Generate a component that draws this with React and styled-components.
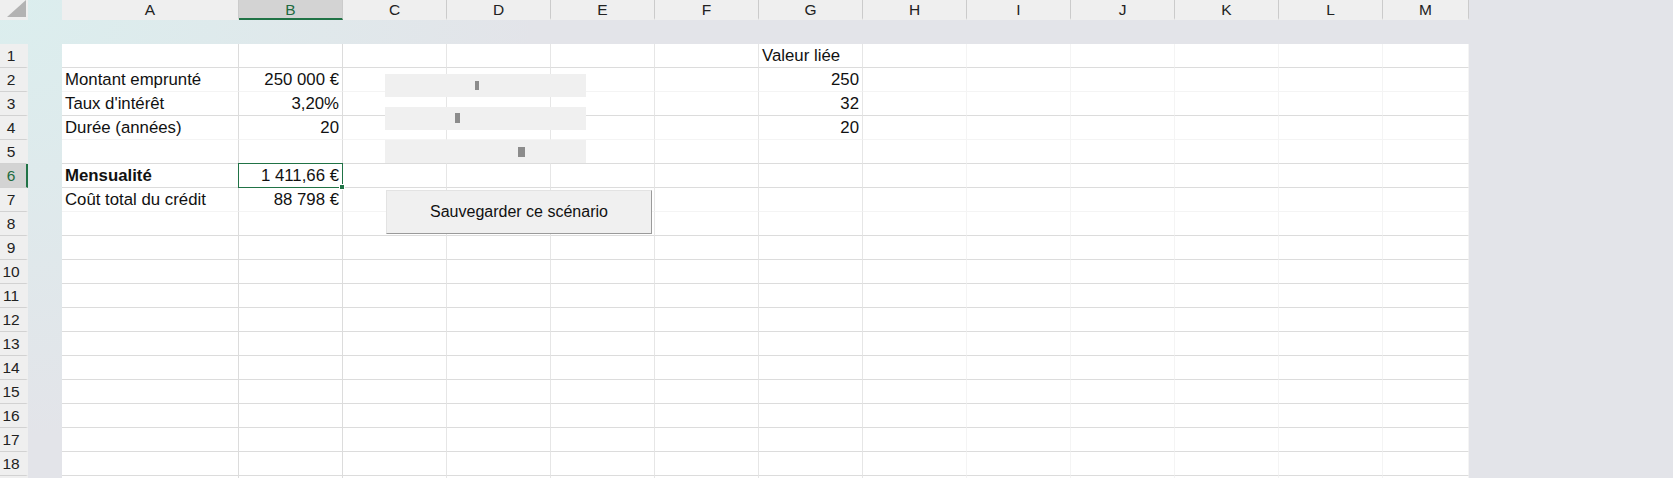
import React from "react";
import styled, { createGlobalStyle, css } from "styled-components";

const GlobalStyle = createGlobalStyle`
  html, body {
    margin: 0;
    padding: 0;
    width: 1673px;
    height: 478px;
    overflow: hidden;
  }
  body {
    font-family: "Liberation Sans", Arial, sans-serif;
    background:
      radial-gradient(ellipse 540px 440px at 0 0, #dbeeee 0%, rgba(227,228,233,0) 100%),
      #e3e4e9;
  }
`;

const LINE = {
  strong: "#dcdcdc",
  medium: "#e6e6e6",
  faint: "#f4f4f4",
};

const COLUMNS = [
  { key: "A", width: 177, v: "strong" },
  { key: "B", width: 104, v: "strong" },
  { key: "C", width: 104, v: "medium" },
  { key: "D", width: 104, v: "medium" },
  { key: "E", width: 104, v: "medium" },
  { key: "F", width: 104, v: "medium" },
  { key: "G", width: 104, v: "medium" },
  { key: "H", width: 104, v: "faint" },
  { key: "I", width: 104, v: "faint" },
  { key: "J", width: 104, v: "faint" },
  { key: "K", width: 104, v: "faint" },
  { key: "L", width: 104, v: "faint" },
  { key: "M", width: 86, v: "faint" },
];

const ROW_LINES = {
  1: "strong",
  2: "faint",
  3: "strong",
  4: "faint",
  5: "strong",
  6: "strong",
  7: "faint",
};

const DATA = {
  1: { G: { text: "Valeur liée" } },
  2: {
    A: { text: "Montant emprunté" },
    B: { text: "250 000 €", right: true },
    G: { text: "250", right: true },
  },
  3: {
    A: { text: "Taux d'intérêt" },
    B: { text: "3,20%", right: true },
    G: { text: "32", right: true },
  },
  4: {
    A: { text: "Durée (années)" },
    B: { text: "20", right: true },
    G: { text: "20", right: true },
  },
  6: {
    A: { text: "Mensualité", bold: true },
    B: { text: "1 411,66 €", right: true, selected: true },
  },
  7: {
    A: { text: "Coût total du crédit" },
    B: { text: "88 798 €", right: true },
  },
};

const SLIDERS = [
  { top: 74, thumbLeft: 90, thumbWidth: 4, thumbTop: 7, thumbHeight: 9 },
  { top: 107, thumbLeft: 70, thumbWidth: 5, thumbTop: 6, thumbHeight: 10 },
  { top: 140, thumbLeft: 133, thumbWidth: 7, thumbTop: 7, thumbHeight: 10 },
];

const Sheet = styled.div`
  position: relative;
  display: flex;
  flex-direction: column;
  width: 1469px;
`;

const HeaderBar = styled.div`
  display: flex;
  height: 20px;
`;

const Corner = styled.div`
  width: 28px;
  height: 20px;
  background: #efefef;
  display: flex;
  align-items: flex-start;
  justify-content: flex-end;
  box-sizing: border-box;
  padding-right: 2px;
`;

const Gutter = styled.div`
  width: 34px;
  flex: none;
`;

const ColHeader = styled.div`
  width: ${(p) => p.$w}px;
  flex: none;
  box-sizing: border-box;
  height: 20px;
  background: ${(p) => (p.$active ? "#d3d3d3" : "#efefef")};
  color: ${(p) => (p.$active ? "#1e6b41" : "#222")};
  border-right: 1px solid #cbcbcb;
  border-bottom: 2px solid ${(p) => (p.$active ? "#217346" : "#efefef")};
  font-size: 15.5px;
  line-height: 19px;
  text-align: center;
`;

const Band = styled.div`
  height: 24px;
`;

const Row = styled.div`
  display: flex;
  height: 24px;
`;

const RowHeader = styled.div`
  width: 28px;
  flex: none;
  box-sizing: border-box;
  background: ${(p) => (p.$active ? "#d3d3d3" : "#efefef")};
  color: ${(p) => (p.$active ? "#1e6b41" : "#222")};
  border-bottom: 1px solid #d2d2d2;
  border-right: 2px solid ${(p) => (p.$active ? "#217346" : "#efefef")};
  font-size: 15.5px;
  line-height: 23px;
  text-align: center;
  padding-right: 4px;
`;

const Cell = styled.div`
  position: relative;
  width: ${(p) => p.$w}px;
  flex: none;
  box-sizing: border-box;
  background: #fff;
  border-right: 1px solid ${(p) => LINE[p.$v]};
  border-bottom: 1px solid ${(p) => LINE[p.$h]};
  font-size: 16.8px;
  line-height: 23px;
  color: #111;
  white-space: nowrap;
  padding: 0 3px;
  text-align: ${(p) => (p.$right ? "right" : "left")};
  font-weight: ${(p) => (p.$bold ? 700 : 400)};
  ${(p) =>
    p.$selected &&
    css`
      &::after {
        content: "";
        position: absolute;
        left: -1px;
        top: -1px;
        right: -1px;
        bottom: -1px;
        border: 1.5px solid #217346;
        pointer-events: none;
      }
      &::before {
        content: "";
        position: absolute;
        right: -3px;
        bottom: -3px;
        width: 4px;
        height: 4px;
        background: #217346;
        border: 1px solid #fff;
        z-index: 2;
      }
    `}
`;

const Track = styled.div`
  position: absolute;
  left: 385px;
  top: ${(p) => p.$top}px;
  width: 201px;
  height: 23px;
  background: #f0f0f0;
`;

const Thumb = styled.div`
  position: absolute;
  background: #8c8c8c;
`;

const SaveButton = styled.button`
  position: absolute;
  left: 386px;
  top: 190px;
  width: 266px;
  height: 44px;
  margin: 0;
  padding: 0;
  box-sizing: border-box;
  background: #f0f0f0;
  border-style: solid;
  border-width: 1px;
  border-color: #e3e3e3 #9a9a9a #9a9a9a #e3e3e3;
  font-family: "Liberation Sans", Arial, sans-serif;
  font-size: 16px;
  color: #111;
  cursor: default;
`;

function CornerTriangle() {
  return (
    <svg width="19" height="17" viewBox="0 0 19 17">
      <polygon points="19,0 19,17 0,17" fill="#b3b3b3" />
    </svg>
  );
}

export default function App() {
  const rows = Array.from({ length: 19 }, (_, i) => i + 1);
  return (
    <>
      <GlobalStyle />
      <Sheet>
        <HeaderBar>
          <Corner>
            <CornerTriangle />
          </Corner>
          <Gutter />
          {COLUMNS.map((c) => (
            <ColHeader key={c.key} $w={c.width} $active={c.key === "B"}>
              {c.key}
            </ColHeader>
          ))}
        </HeaderBar>
        <Band />
        {rows.map((r) => (
          <Row key={r}>
            <RowHeader $active={r === 6}>{r <= 18 ? r : ""}</RowHeader>
            <Gutter />
            {COLUMNS.map((c) => {
              const d = (DATA[r] && DATA[r][c.key]) || {};
              return (
                <Cell
                  key={c.key}
                  $w={c.width}
                  $v={c.v}
                  $h={ROW_LINES[r] || "strong"}
                  $right={d.right}
                  $bold={d.bold}
                  $selected={d.selected}
                >
                  {d.text || ""}
                </Cell>
              );
            })}
          </Row>
        ))}
        {SLIDERS.map((s, i) => (
          <Track key={i} $top={s.top}>
            <Thumb
              style={{
                left: s.thumbLeft,
                top: s.thumbTop,
                width: s.thumbWidth,
                height: s.thumbHeight,
              }}
            />
          </Track>
        ))}
        <SaveButton type="button">Sauvegarder ce scénario</SaveButton>
      </Sheet>
    </>
  );
}
